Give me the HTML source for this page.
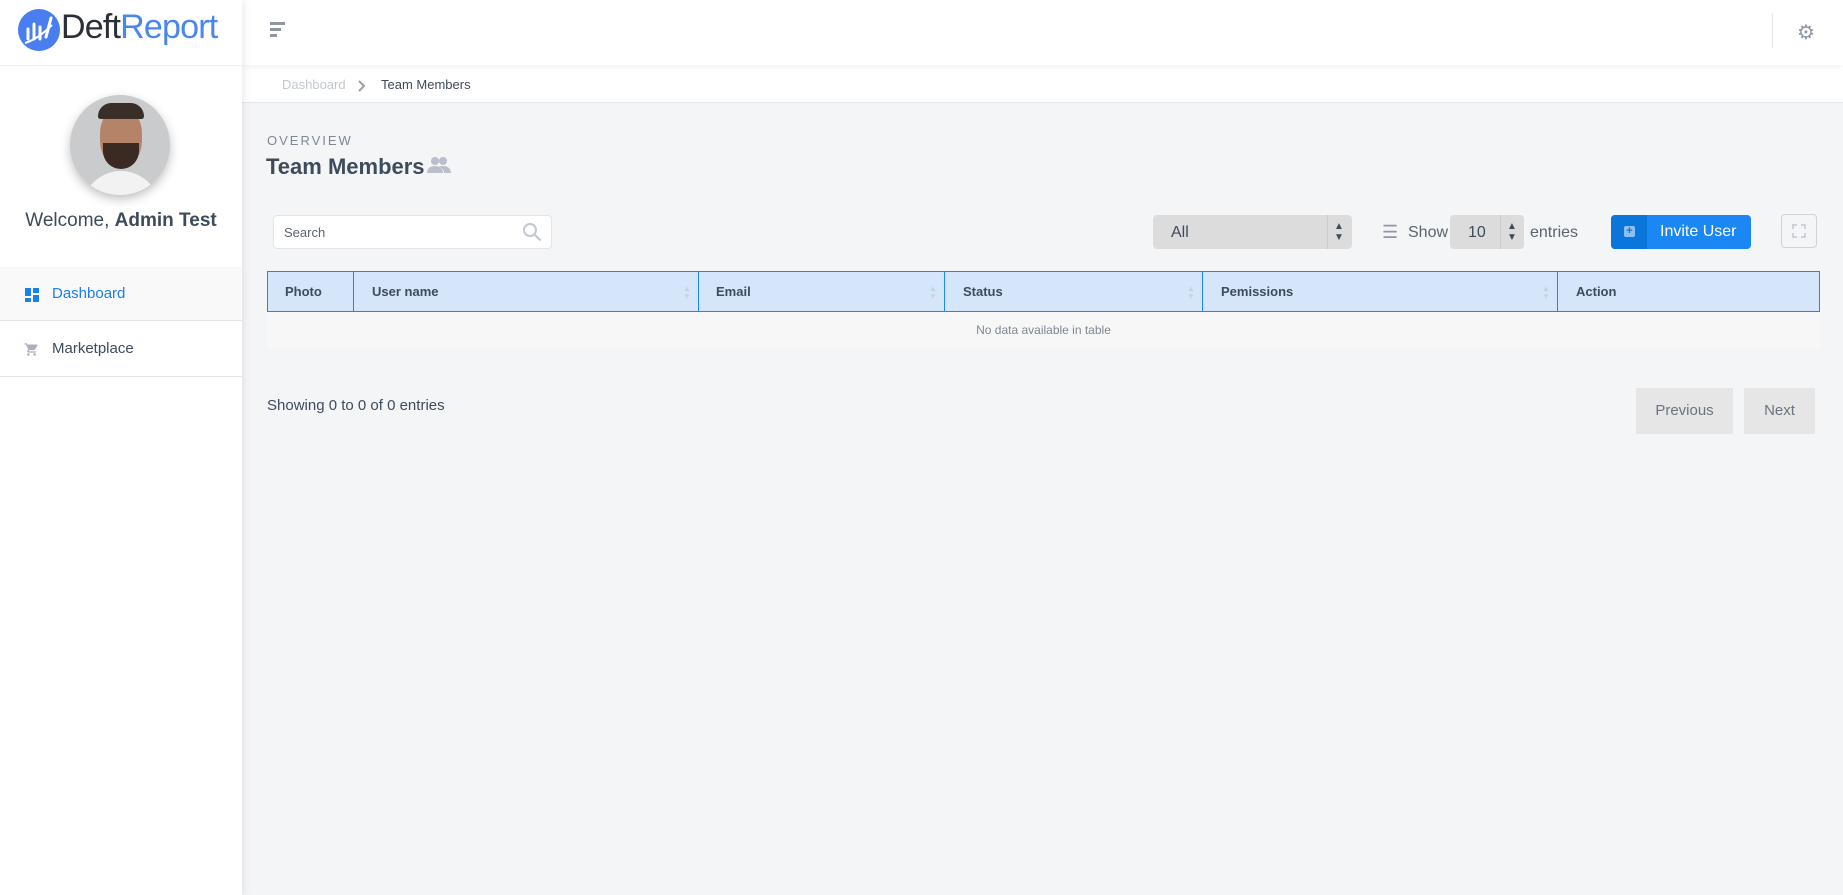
<!DOCTYPE html>
<html><head><meta charset="utf-8"><style>
*{box-sizing:border-box;margin:0;padding:0}
body{width:1843px;height:895px;background:#f4f5f7;font-family:"Liberation Sans",sans-serif;position:relative;overflow:hidden;color:#3e4b5b}
.abs{position:absolute}
#side{left:0;top:0;width:242px;height:895px;background:#fff;box-shadow:2px 0 8px rgba(0,0,0,.08);z-index:2}
#head{left:242px;top:0;right:0;height:65px;background:#fff;box-shadow:0 2px 6px rgba(0,0,0,.06);z-index:1}
#crumb{left:242px;top:65px;right:0;height:38px;background:#fff;border-bottom:1px solid #e4e6ea}
</style></head><body>
<div id="side" class="abs">
  <svg class="abs" style="left:18px;top:9px" width="42" height="42" viewBox="0 0 42 42"><circle cx="21" cy="21" r="21" fill="#4a7ef0"/><path d="M10 30V20M16 30V15M22 30V18M28 28L33 9" stroke="#fff" stroke-width="3" fill="none" stroke-linecap="round"/><path d="M7 34Q20 30 34 16" stroke="#fff" stroke-width="2" fill="none"/></svg>
  <div class="abs" style="left:61px;top:8px;font-size:34px;letter-spacing:-0.8px"><span style="color:#2a2f3a">Deft</span><span style="color:#4a86f0">Report</span></div>
  <div class="abs" style="left:0;top:65px;width:242px;border-top:1px solid #eee"></div>
  <div class="abs" style="left:70px;top:95px;width:100px;height:100px;border-radius:50%;overflow:hidden;background:#c9cbcd;box-shadow:0 4px 10px rgba(0,0,0,.25)">
    <div class="abs" style="left:30px;top:12px;width:42px;height:60px;border-radius:45%;background:#b58468"></div>
    <div class="abs" style="left:28px;top:8px;width:46px;height:16px;border-radius:20px 20px 4px 4px;background:#3a2e28"></div>
    <div class="abs" style="left:33px;top:48px;width:36px;height:26px;border-radius:0 0 18px 18px;background:#3a2a22"></div>
    <div class="abs" style="left:12px;top:76px;width:78px;height:40px;border-radius:40px 40px 0 0;background:#f2f2f2"></div>
  </div>
  <div class="abs" style="left:0;width:242px;top:210px;text-align:center;font-size:19px;color:#3e4b5b">Welcome, <b>Admin Test</b></div>
  <div class="abs" style="left:0;top:267px;width:242px;height:54px;background:#f9f9f9;border-bottom:1px solid #e6e6e6"></div>
  <svg class="abs" style="left:25px;top:288px" width="14" height="14"><rect x="0" y="0" width="6" height="8" fill="#1a7ef5"/><rect x="8" y="0" width="6" height="5" fill="#1a7ef5"/><rect x="0" y="10" width="6" height="4" fill="#1a7ef5"/><rect x="8" y="7" width="6" height="7" fill="#1a7ef5"/></svg>
  <div class="abs" style="left:52px;top:285px;font-size:15px;color:#1a7ef5">Dashboard</div>
  <svg class="abs" style="left:24px;top:342px" width="15" height="15" viewBox="0 0 24 24"><path fill="#aab1bc" d="M7 18a2 2 0 100 4 2 2 0 000-4zM1 2v2h2l3.6 7.6-1.4 2.4C5 15.3 6 17 7 17h12v-2H7.4l1.1-2h7.5c.8 0 1.4-.4 1.7-1l3.6-6.5A1 1 0 0020.4 4H5.2l-.9-2H1zm16 16a2 2 0 100 4 2 2 0 000-4z"/></svg>
  <div class="abs" style="left:52px;top:340px;font-size:15px;color:#3e4b5b">Marketplace</div>
  <div class="abs" style="left:0;top:376px;width:242px;border-top:1px solid #e6e6e6"></div>
</div>
<div id="head" class="abs">
  <div class="abs" style="left:28px;top:22px;width:15px;height:3px;background:#8e96a3"></div>
  <div class="abs" style="left:28px;top:28px;width:11px;height:3px;background:#8e96a3"></div>
  <div class="abs" style="left:28px;top:34px;width:7px;height:3px;background:#8e96a3"></div>
  <div class="abs" style="left:1530px;top:14px;height:34px;border-left:1px solid #e6e6e6"></div>
  <div class="abs" style="left:1555px;top:20px;font-size:20px;color:#8e96a3">⚙</div>
</div>
<div id="crumb" class="abs">
  <div class="abs" style="left:40px;top:12px;font-size:13px;color:#c3c8cf">Dashboard</div>
  <svg class="abs" style="left:115px;top:15px" width="10" height="12"><path d="M2 1l5 5-5 5" stroke="#9aa1ab" stroke-width="2" fill="none"/></svg>
  <div class="abs" style="left:139px;top:12px;font-size:13px;color:#3e4b5b">Team Members</div>
</div>
<div class="abs" style="left:267px;top:133px;font-size:13px;letter-spacing:2px;color:#7d8794">OVERVIEW</div>
<div class="abs" style="left:266px;top:154px;font-size:22px;font-weight:bold;color:#3e4b5b">Team Members</div>
<svg class="abs" style="left:427px;top:156px" width="24" height="18" viewBox="0 0 24 18"><circle cx="8" cy="5" r="4" fill="#b8bfca"/><circle cx="16" cy="5" r="4" fill="#b8bfca"/><path d="M0 17c0-5 4-7 8-7s8 2 8 7z M12 10.5c1-.4 2.5-.5 4-.5 4 0 8 2 8 7h-7c0-3-2-5-5-6.5z" fill="#b8bfca"/></svg>
<div class="abs" style="left:273px;top:215px;width:279px;height:34px;background:#fff;border:1px solid #e2e4e8;border-radius:4px;font-size:13px;color:#5a6472;padding:9px 10px">Search</div>
<svg class="abs" style="left:522px;top:222px" width="20" height="20"><circle cx="8" cy="8" r="6" stroke="#c3c8cf" stroke-width="2" fill="none"/><path d="M12.5 12.5l6 6" stroke="#c3c8cf" stroke-width="2"/></svg>
<div class="abs" style="left:1153px;top:215px;width:199px;height:34px;background:#dcdcdc;border-radius:4px;font-size:16px;color:#3e4b5b;padding:9px 18px">All</div>
<div class="abs" style="left:1327px;top:215px;height:34px;border-left:1px solid #ccc"></div>
<div class="abs" style="left:1334px;top:221px;font-size:10px;line-height:11px;color:#3e4b5b">▲<br>▼</div>
<div class="abs" style="left:1382px;top:222px;font-size:18px;color:#8e96a3">☰</div>
<div class="abs" style="left:1408px;top:224px;font-size:16px;color:#5a6472">Show</div>
<div class="abs" style="left:1450px;top:215px;width:74px;height:34px;background:#dcdcdc;border-radius:4px;font-size:16px;color:#3e4b5b;padding:9px 18px">10</div>
<div class="abs" style="left:1500px;top:215px;height:34px;border-left:1px solid #ccc"></div>
<div class="abs" style="left:1507px;top:221px;font-size:10px;line-height:11px;color:#3e4b5b">▲<br>▼</div>
<div class="abs" style="left:1530px;top:224px;font-size:16px;color:#5a6472">entries</div>
<div class="abs" style="left:1611px;top:215px;width:140px;height:34px;background:#1a87f5;border-radius:4px;overflow:hidden">
  <div class="abs" style="left:0;top:0;width:36px;height:34px;background:#0a76dc"></div>
  <div class="abs" style="left:13px;top:11px;width:11px;height:11px;background:#8cc0f7;border-radius:2px;color:#0a76dc;font-size:11px;line-height:11px;text-align:center;font-weight:bold">+</div>
  <div class="abs" style="left:49px;top:8px;font-size:16px;color:#fff">Invite User</div>
</div>
<div class="abs" style="left:1781px;top:214px;width:36px;height:34px;border:1px solid #cfd3d9;border-radius:4px"></div>
<svg class="abs" style="left:1792px;top:224px" width="14" height="14"><path d="M1 5V1h4M9 1h4v4M13 9v4H9M5 13H1V9" stroke="#cfd3d9" stroke-width="2" fill="none"/></svg>
<div class="abs" style="left:267px;top:271px;width:1553px;height:41px;background:#d5e6fb;border:1px solid #1a87f5"></div>
<div class="abs" style="left:353px;top:271px;height:41px;border-left:1px solid #1a87f5"></div>
<div class="abs" style="left:698px;top:271px;height:41px;border-left:1px solid #1a87f5"></div>
<div class="abs" style="left:944px;top:271px;height:41px;border-left:1px solid #1a87f5"></div>
<div class="abs" style="left:1202px;top:271px;height:41px;border-left:1px solid #1a87f5"></div>
<div class="abs" style="left:1557px;top:271px;height:41px;border-left:1px solid #1a87f5"></div>
<div class="abs" style="left:285px;top:284px;font-size:13px;font-weight:bold;color:#3e4b5b">Photo</div>
<div class="abs" style="left:372px;top:284px;font-size:13px;font-weight:bold;color:#3e4b5b">User name</div>
<div class="abs" style="left:716px;top:284px;font-size:13px;font-weight:bold;color:#3e4b5b">Email</div>
<div class="abs" style="left:963px;top:284px;font-size:13px;font-weight:bold;color:#3e4b5b">Status</div>
<div class="abs" style="left:1221px;top:284px;font-size:13px;font-weight:bold;color:#3e4b5b">Pemissions</div>
<div class="abs" style="left:1576px;top:284px;font-size:13px;font-weight:bold;color:#3e4b5b">Action</div>
<div class="abs" style="left:683px;top:285px;font-size:8px;line-height:8px;color:#c8d2de">▲<br>▼</div>
<div class="abs" style="left:929px;top:285px;font-size:8px;line-height:8px;color:#c8d2de">▲<br>▼</div>
<div class="abs" style="left:1187px;top:285px;font-size:8px;line-height:8px;color:#c8d2de">▲<br>▼</div>
<div class="abs" style="left:1542px;top:285px;font-size:8px;line-height:8px;color:#c8d2de">▲<br>▼</div>
<div class="abs" style="left:267px;top:312px;width:1553px;height:36px;background:#f7f7f7;font-size:12px;color:#7d8794;text-align:center;padding-top:11px">No data available in table</div>
<div class="abs" style="left:267px;top:397px;font-size:15px;color:#3e4b5b">Showing 0 to 0 of 0 entries</div>
<div class="abs" style="left:1636px;top:388px;width:97px;height:46px;background:#e6e6e6;font-size:15px;color:#6b7380;text-align:center;padding-top:14px">Previous</div>
<div class="abs" style="left:1744px;top:388px;width:71px;height:46px;background:#e6e6e6;font-size:15px;color:#6b7380;text-align:center;padding-top:14px">Next</div>
</body></html>
